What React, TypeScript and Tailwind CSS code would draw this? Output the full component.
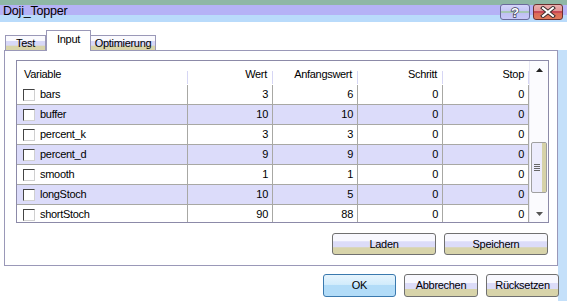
import React from "react";

const rows = [
  { name: "bars", w: 3, a: 6, s: 0, st: 0 },
  { name: "buffer", w: 10, a: 10, s: 0, st: 0 },
  { name: "percent_k", w: 3, a: 3, s: 0, st: 0 },
  { name: "percent_d", w: 9, a: 9, s: 0, st: 0 },
  { name: "smooth", w: 1, a: 1, s: 0, st: 0 },
  { name: "longStoch", w: 10, a: 5, s: 0, st: 0 },
  { name: "shortStoch", w: 90, a: 88, s: 0, st: 0 },
];

function XpButton({ label, w, primary }: { label: string; w: string; primary?: boolean }) {
  return (
    <div
      className={
        "flex items-center justify-center rounded-[3px] border " +
        w +
        " " +
        (primary
          ? "border-[#3a79ae] bg-[linear-gradient(to_bottom,#e6f4fd_0,#d2ecfc_45%,#b2dcf8_50%,#b2dcf8_100%)]"
          : "border-[#707070] bg-[linear-gradient(to_bottom,#f8f8fe_0,#f8f8fe_36%,#dcdcf8_38%,#dcdcf8_66%,#d8d4aa_68%,#d8d4aa_100%)]")
      }
    >
      <span className="text-[11px] leading-none tracking-[-0.3px] text-black">{label}</span>
    </div>
  );
}

function Checkbox() {
  return (
    <div className="h-[12px] w-[12px] border-t border-l border-t-[#444] border-l-[#444] border-r border-b border-r-[#d0d0d0] border-b-[#d0d0d0] bg-white" />
  );
}

export default function App() {
  return (
    <div
      className="flex h-[301px] w-[567px] flex-col overflow-hidden bg-white text-black"
      style={{ fontFamily: '"Liberation Sans", Arial, sans-serif' }}
    >
      {/* Title bar */}
      <div className="flex h-[22px] shrink-0 items-start bg-[linear-gradient(to_bottom,#8fb7a6_0,#8fb7a6_5px,#b5b2f6_5px,#b5b2f6_15px,#b9dbfb_15px,#b9dbfb_22px)] pl-[3px]">
        <span className="mt-[4px] text-[12.5px] leading-[14px] tracking-[-0.2px] text-black">Doji_Topper</span>
        <div className="ml-auto mr-[4px] mt-[4px] flex gap-[3px]">
          <div className="flex h-[16px] w-[30px] items-center justify-center rounded-[3px] border border-[#6a6a9a] bg-[linear-gradient(to_bottom,#d4d4fa_0,#c6c6f6_40%,#a6c6b4_42%,#a6c6b4_56%,#c0c0f4_58%,#c8c8f8_100%)]">
            <svg width="14" height="14" viewBox="0 0 14 14">
              <text
                x="7"
                y="12"
                textAnchor="middle"
                fontSize="13"
                fontWeight="bold"
                fontFamily="Liberation Sans, Arial, sans-serif"
                fill="#fff"
                stroke="#3a3a5a"
                strokeWidth="1.4"
                paintOrder="stroke"
              >
                ?
              </text>
            </svg>
          </div>
          <div className="flex h-[16px] w-[30px] items-center justify-center rounded-[3px] border border-[#6a3030] bg-[linear-gradient(to_bottom,#eab0b0_0,#e49898_40%,#c84a55_42%,#c84a55_58%,#dc6a58_60%,#e07a5a_100%)]">
            <svg width="16" height="12" viewBox="0 0 16 12">
              <path d="M3 2 L13 10 M13 2 L3 10" stroke="#3a2a2a" strokeWidth="4" strokeLinecap="square" />
              <path d="M3 2 L13 10 M13 2 L3 10" stroke="#fff" strokeWidth="2" strokeLinecap="square" />
            </svg>
          </div>
        </div>
      </div>

      <div className="flex flex-1">
        {/* Main column */}
        <div className="relative z-10 flex w-[558px] flex-col">
          {/* Tabs */}
          <div className="flex h-[28px] items-end pl-[5px]">
            <div className="mb-[-1px] flex h-[16px] w-[41px] items-center justify-center border border-b-0 border-[#9a98b8] bg-[linear-gradient(to_bottom,#fafafe_0,#fafafe_30%,#d8d8f8_34%,#d8d8f8_62%,#d8d4aa_66%,#d8d4aa_100%)]">
              <span className="text-[11px] leading-none tracking-[-0.3px]">Test</span>
            </div>
            <div className="relative z-10 mb-[-1px] flex h-[21px] w-[45px] items-start justify-center border border-b-0 border-[#9a98b8] bg-white pt-[3px]">
              <span className="text-[11px] leading-none tracking-[-0.3px]">Input</span>
            </div>
            <div className="mb-[-1px] flex h-[16px] w-[65px] items-center justify-center border border-b-0 border-l-0 border-[#9a98b8] bg-[linear-gradient(to_bottom,#fafafe_0,#fafafe_30%,#d8d8f8_34%,#d8d8f8_62%,#d8d4aa_66%,#d8d4aa_100%)]">
              <span className="text-[11px] leading-none tracking-[-0.3px]">Optimierung</span>
            </div>
          </div>

          {/* Panel */}
          <div className="ml-[4px] flex h-[216px] w-[554px] flex-col border border-[#9a98b8] pl-[11px] pt-[9px]">
            {/* Grid */}
            <div className="flex h-[163px] w-[533px] border border-[#8c8aa8]">
              <div className="flex w-[512px] flex-col overflow-hidden">
                {/* Header */}
                <div className="flex h-[24px] shrink-0 text-[11px] tracking-[-0.3px]">
                  <div className="flex w-[171px] items-end">
                    <span className="mb-[5px] flex-1 pl-[7px] leading-none">Variable</span>
                    <div className="mb-[1px] h-[13px] w-px bg-[#d6d6f4]" />
                  </div>
                  <div className="flex w-[85px] items-end">
                    <span className="mb-[5px] flex-1 pr-[5px] text-right leading-none">Wert</span>
                    <div className="mb-[1px] h-[13px] w-px bg-[#d6d6f4]" />
                  </div>
                  <div className="flex w-[85px] items-end">
                    <span className="mb-[5px] flex-1 pr-[5px] text-right leading-none">Anfangswert</span>
                    <div className="mb-[1px] h-[13px] w-px bg-[#d6d6f4]" />
                  </div>
                  <div className="flex w-[85px] items-end">
                    <span className="mb-[5px] flex-1 pr-[5px] text-right leading-none">Schritt</span>
                    <div className="mb-[1px] h-[13px] w-px bg-[#d6d6f4]" />
                  </div>
                  <div className="flex w-[86px] items-end">
                    <span className="mb-[5px] flex-1 pr-[4px] text-right leading-none">Stop</span>
                    <div className="mb-[1px] h-[13px] w-px bg-[#d6d6f4]" />
                  </div>
                </div>
                {/* Rows */}
                {rows.map((r, i) => (
                  <div
                    key={r.name}
                    className={
                      "flex h-[20px] shrink-0 border-b border-[#a8a8a4] text-[11px] tracking-[-0.3px] " +
                      (i % 2 === 1 ? "bg-[#dcdcfa]" : "bg-white")
                    }
                  >
                    <div className="flex w-[171px] items-center gap-[5px] border-r border-[#a8a8a4] pl-[6px]">
                      <Checkbox />
                      <span className="leading-none">{r.name}</span>
                    </div>
                    <div className="flex w-[85px] items-center justify-end border-r border-[#a8a8a4] pr-[4px]">
                      <span className="leading-none">{r.w}</span>
                    </div>
                    <div className="flex w-[85px] items-center justify-end border-r border-[#a8a8a4] pr-[4px]">
                      <span className="leading-none">{r.a}</span>
                    </div>
                    <div className="flex w-[85px] items-center justify-end border-r border-[#a8a8a4] pr-[4px]">
                      <span className="leading-none">{r.s}</span>
                    </div>
                    <div className="flex w-[86px] items-center justify-end border-r border-[#a8a8a4] pr-[4px]">
                      <span className="leading-none">{r.st}</span>
                    </div>
                  </div>
                ))}
              </div>
              {/* Scrollbar */}
              <div className="flex w-[19px] flex-col border-l border-[#e8e8f4] bg-[#fbfbfe]">
                <div className="flex h-[17px] items-center justify-center">
                  <svg width="7" height="4" viewBox="0 0 7 4">
                    <path d="M0 4 L3.5 0 L7 4 Z" fill="#222" />
                  </svg>
                </div>
                <div className="h-[64px]" />
                <div className="mx-[1px] flex h-[51px] rounded-[2px] border border-[#a0a0a0] bg-[#ececfc]">
                  <div className="flex flex-1 items-center justify-center">
                    <div className="flex flex-col gap-[1px]">
                      <div className="h-px w-[6px] bg-[#666]" />
                      <div className="h-px w-[6px] bg-[#666]" />
                      <div className="h-px w-[6px] bg-[#666]" />
                      <div className="h-px w-[6px] bg-[#666]" />
                    </div>
                  </div>
                  <div className="w-[4px] bg-[#d6d2a8]" />
                </div>
                <div className="flex flex-1 items-end justify-center pb-[6px]">
                  <svg width="7" height="4" viewBox="0 0 7 4">
                    <path d="M0 0 L3.5 4 L7 0 Z" fill="#555" />
                  </svg>
                </div>
              </div>
            </div>
            {/* Laden / Speichern */}
            <div className="mt-[10px] flex gap-[8px] pl-[316px]">
              <XpButton label="Laden" w="w-[104px] h-[22px]" />
              <XpButton label="Speichern" w="w-[104px] h-[22px]" />
            </div>
          </div>

          {/* Bottom buttons */}
          <div className="mr-[-1px] mt-[8px] flex justify-end gap-[8px]">
            <XpButton label="OK" w="w-[73px] h-[23px]" primary />
            <XpButton label="Abbrechen" w="w-[74px] h-[23px]" />
            <XpButton label="Rücksetzen" w="w-[73px] h-[23px]" />
          </div>
        </div>
        {/* Right strip */}
        <div className="mt-[28px] w-[9px] bg-[#c4e0fa]" />
      </div>
    </div>
  );
}
